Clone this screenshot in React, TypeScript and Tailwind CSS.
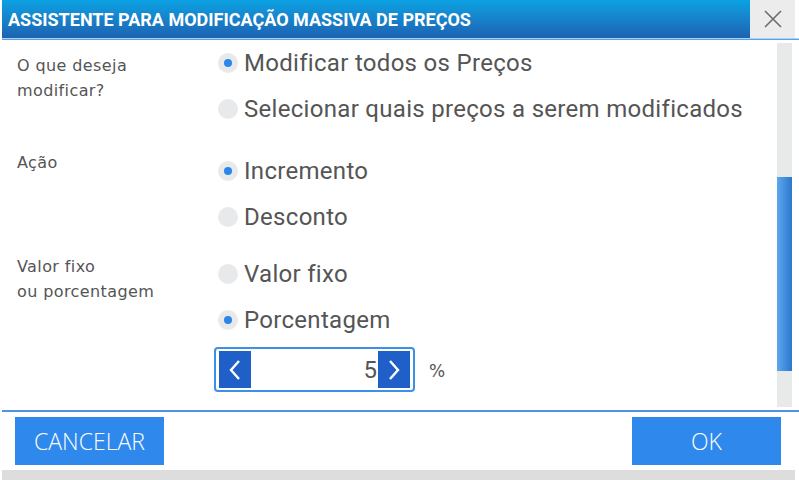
const Radio = ({ label, checked }: { label: string; checked?: boolean }) => {
  return (
    <div className="flex h-[46px] items-center gap-[6px]">
      <span className="flex h-[20px] w-[20px] items-center justify-center rounded-full bg-[#e8e9ea]">
        {checked && <span className="h-[8px] w-[8px] rounded-full bg-[#2a86ea]" />}
      </span>
      <span className="font-['Roboto',sans-serif] text-[24px] tracking-[0.3px] text-[#555555]">{label}</span>
    </div>
  );
};

const Label = ({ children, className }: { children: React.ReactNode; className: string }) => (
  <div className={`w-[218px] shrink-0 pl-[17px] font-['DejaVu_Sans',sans-serif] text-[16px] leading-[25px] tracking-[0.4px] text-[#555555] ${className}`}>
    {children}
  </div>
);

const App = () => {
  return (
    <div className="flex h-[480px] w-[799px] flex-col overflow-hidden bg-white">
      <header className="flex h-[38px] shrink-0 pl-[2px] pr-[4px]">
        <div className="flex flex-1 items-center bg-gradient-to-b from-[#0aa2e3] to-[#1c62b2] pl-[6px]">
          <h1 className="font-['Roboto',sans-serif] text-[18px] font-bold text-white">
            ASSISTENTE PARA MODIFICAÇÃO MASSIVA DE PREÇOS
          </h1>
        </div>
        <button className="flex w-[45px] items-center justify-center bg-[#ececec]">
          <svg width="20" height="20" viewBox="0 0 20 20" stroke="#6b6b6b" strokeWidth="1.6" fill="none">
            <path d="M2 2 L18 18 M18 2 L2 18" />
          </svg>
        </button>
      </header>
      <div className="ml-[2px] h-[2px] shrink-0 border-t border-[#a9d2f7] bg-[#5c9fe9]" />

      <div className="flex h-[370px] shrink-0">
        <div className="flex-1">
          <div className="flex">
            <Label className="pt-[13px]">
              O que deseja
              <br />
              modificar?
            </Label>
            <div className="flex flex-col">
              <Radio label="Modificar todos os Preços" checked />
              <Radio label="Selecionar quais preços a serem modificados" />
            </div>
          </div>
          <div className="mt-[16px] flex">
            <Label className="pt-[2px]">Ação</Label>
            <div className="flex flex-col">
              <Radio label="Incremento" checked />
              <Radio label="Desconto" />
            </div>
          </div>
          <div className="mt-[11px] flex">
            <Label className="pt-[3px]">
              Valor fixo
              <br />
              ou porcentagem
            </Label>
            <div className="flex flex-col">
              <Radio label="Valor fixo" />
              <Radio label="Porcentagem" checked />
              <div className="ml-[-4px] mt-[4px] flex items-center">
                <div className="flex h-[45px] w-[201px] items-center rounded-[4px] border-2 border-[#3d8fea] px-[3px]">
                  <button className="flex h-[37px] w-[32px] items-center justify-center bg-[#1f5fc8]">
                    <svg width="14" height="22" viewBox="0 0 14 22" stroke="white" strokeWidth="2.4" fill="none">
                      <path d="M11 2 L3 11 L11 20" />
                    </svg>
                  </button>
                  <span className="flex-1 pr-[1px] text-right font-['Roboto',sans-serif] text-[24px] text-[#555555]">5</span>
                  <button className="flex h-[37px] w-[32px] items-center justify-center bg-[#1f5fc8]">
                    <svg width="14" height="22" viewBox="0 0 14 22" stroke="white" strokeWidth="2.4" fill="none">
                      <path d="M3 2 L11 11 L3 20" />
                    </svg>
                  </button>
                </div>
                <span className="ml-[14px] mt-[4px] font-['DejaVu_Sans',sans-serif] text-[17px] text-[#555555]">%</span>
              </div>
            </div>
          </div>
        </div>
        <div className="mr-[7px] flex w-[15px] flex-col py-[3px]">
          <div className="flex h-full flex-col bg-[#e8e9e9]">
            <div className="mt-[134px] h-[194px] bg-gradient-to-r from-[#5ea6ee] to-[#2a78cc]" />
          </div>
        </div>
      </div>

      <div className="ml-[2px] h-[2px] shrink-0 bg-[#4f94e4]" />
      <footer className="flex h-[58px] shrink-0 justify-between pl-[15px] pr-[18px] pt-[5px]">
        <button className="h-[48px] w-[149px] bg-[#2f89ec] font-['Open_Sans',sans-serif] text-[23px] font-light text-white">
          CANCELAR
        </button>
        <button className="h-[48px] w-[149px] bg-[#2f89ec] font-['Open_Sans',sans-serif] text-[23px] font-light text-white">
          OK
        </button>
      </footer>
      <div className="ml-[2px] mr-[4px] h-[10px] shrink-0 bg-[#dddddd]" />
    </div>
  );
};

export default App;
